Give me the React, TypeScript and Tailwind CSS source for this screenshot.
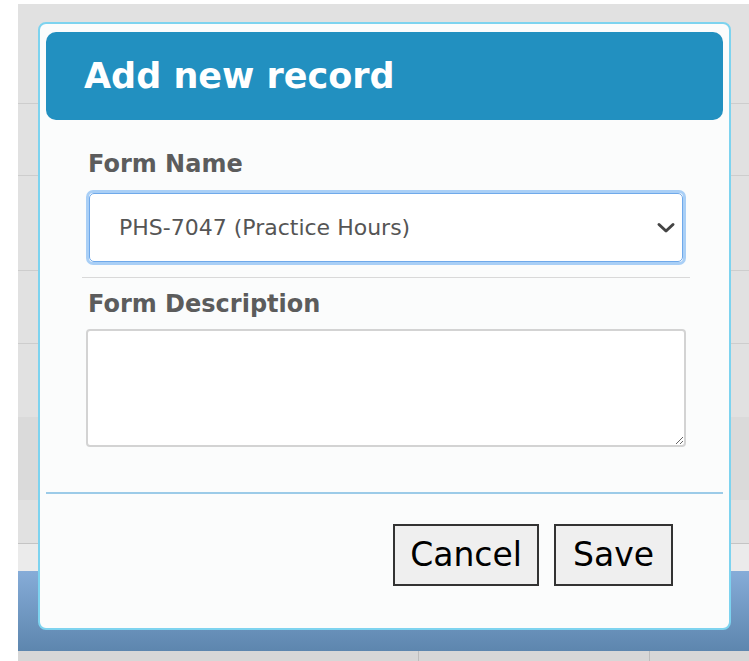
import React from 'react';

// Grid rows drawn behind the modal
const Backdrop: React.FC = () => (
  <div className="h-[661px] bg-white pl-[18px] pt-[4px]">
    <div className="flex h-full flex-col bg-[#e1e1e1]">
      <div className="h-[100px] border-b border-[#cdcdcd]" />
      <div className="h-[72px] border-b border-[#cdcdcd]" />
      <div className="h-[95px] border-b border-[#cdcdcd]" />
      <div className="h-[73px] border-b border-[#cdcdcd]" />
      <div className="h-[73px]" />
      <div className="h-[83px] bg-[#dadada]" />
      <div className="h-[44px] border-b border-[#c4c4c4]" />
      <div className="h-[27px] bg-[#ebebeb]" />
      <div className="h-[80px] bg-gradient-to-b from-[#86acd8] to-[#5d86ae]" />
      <div className="flex flex-1 bg-[#d7d7d7]">
        <div className="w-[401px] border-r border-[#bdbdbd]" />
        <div className="w-[231px] border-r border-[#bdbdbd]" />
      </div>
    </div>
  </div>
);

const Chevron = () => (
  <svg width="22" height="12" viewBox="0 0 22 12" fill="none" stroke="#444" strokeWidth={3} strokeLinecap="round" strokeLinejoin="round">
    <path d="M4 2.5 L11 9 L18 2.5" />
  </svg>
);

const AddRecordDialog: React.FC = () => (
  <div className="absolute left-[38px] top-[22px] h-[608px] w-[693px] rounded-[8px] border-2 border-[#7dd3ef] bg-[#fbfcfc] px-[6px] pt-[8px] font-['DejaVu_Sans',sans-serif]">
    <div className="flex h-[88px] items-center rounded-[10px] bg-[#2290c0] pl-[38px]">
      <h2 className="text-[35px] font-bold leading-none text-white">Add new record</h2>
    </div>

    <div className="pl-[40px] pr-[37px] pt-[30px]">
      <label className="block pl-[2px] text-[24px] font-bold leading-[28px] text-[#5c5c5c]">Form Name</label>
      <div className="relative mt-[12px] h-[75px] rounded-[7px] border-[3px] border-[#a9cff6] bg-white">
        <div className="absolute inset-0 rounded-[5px] border border-[#6fa9ea]" />
        <div className="flex h-full items-center justify-between pl-[30px] pr-[6px]">
          <span className="text-[22px] leading-[26px] text-[#555]">PHS-7047 (Practice Hours)</span>
          <Chevron />
        </div>
      </div>
      <div className="mx-[-4px] mt-[12px] h-px bg-[#d9d9d9]" />

      <label className="mt-[12px] block pl-[2px] text-[24px] font-bold leading-[28px] text-[#5c5c5c]">Form Description</label>
      <textarea className="mt-[11px] block h-[118px] w-full rounded-[4px] border-2 border-[#d3d3d3] bg-white" />
    </div>

    <div className="mt-[45px] h-[2px] bg-[#9ccbe8]" />

    <div className="flex justify-end gap-[15px] pr-[50px] pt-[30px]">
      <button className="border-2 border-[#333] bg-[#efefef] px-[15px] py-[10px] text-[33px] leading-[38px] text-black">Cancel</button>
      <button className="border-2 border-[#333] bg-[#efefef] px-[17px] py-[10px] text-[33px] leading-[38px] text-black">Save</button>
    </div>
  </div>
);

export default function App() {
  return (
    <div className="relative h-[661px] w-[749px] overflow-hidden">
      <Backdrop />
      <AddRecordDialog />
    </div>
  );
}
